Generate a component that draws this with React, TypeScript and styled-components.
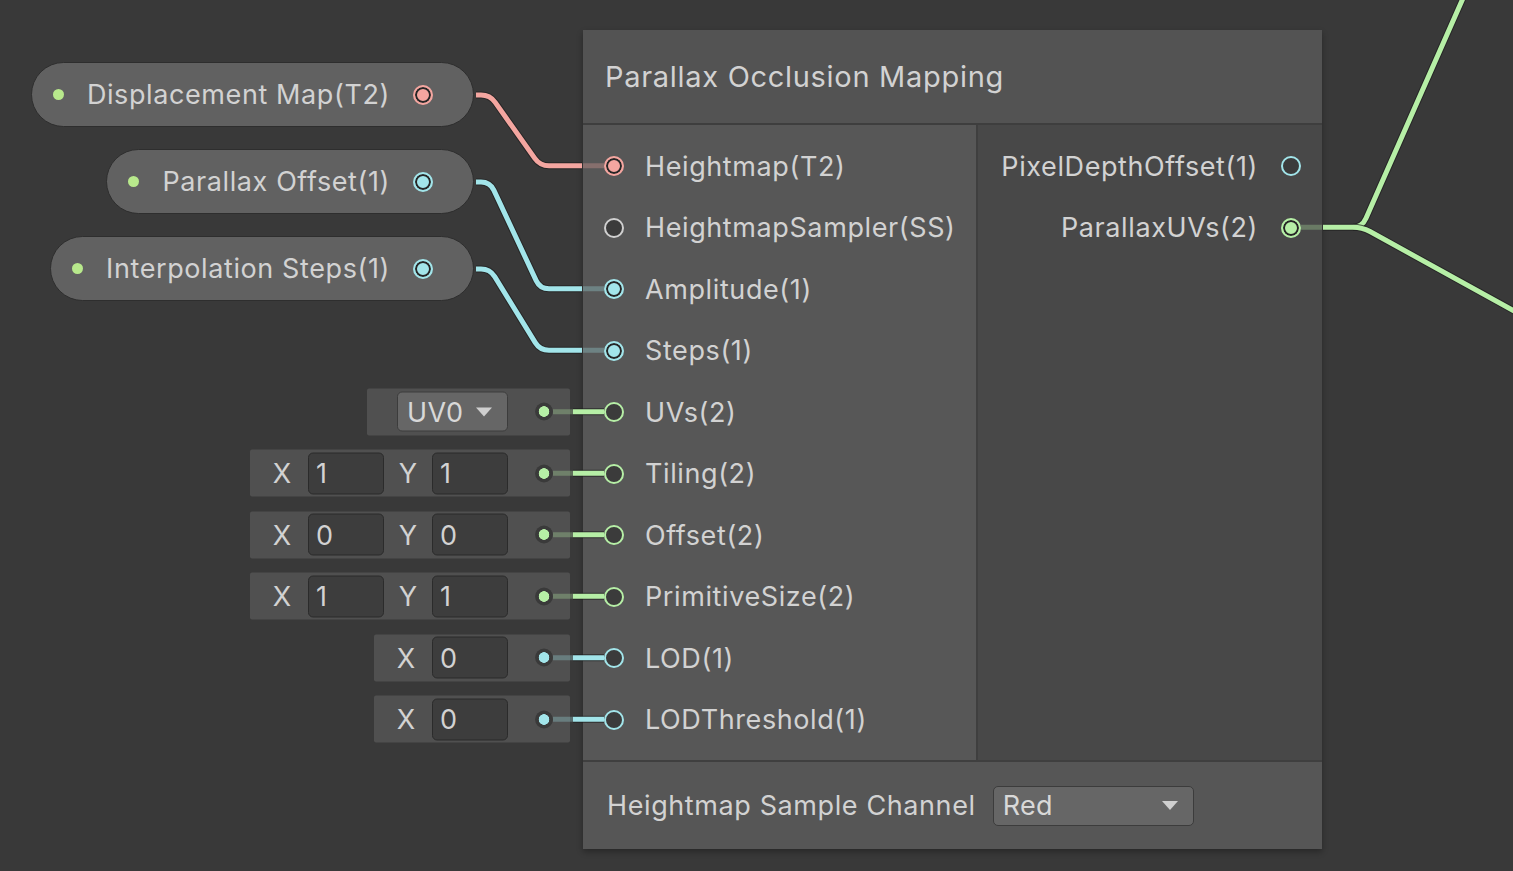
import React from "react";
import styled, { createGlobalStyle } from "styled-components";

const GREEN = "#b6efa6";
const CYAN = "#a2e5ea";
const PINK = "#f4a6a0";
const LIME = "#b8e98c";
const GREY = "#d0d0d0";

const GlobalStyle = createGlobalStyle`
  html, body {
    margin: 0;
    padding: 0;
    background: #393939;
    overflow: hidden;
  }
  body {
    font-family: Inter, "Noto Sans", "Liberation Sans", sans-serif;
    color: #d2d2d2;
  }
`;

const Canvas = styled.div`
  position: relative;
  width: 1513px;
  height: 871px;
  overflow: hidden;
  background: #393939;
`;

const Pill = styled.div<{ $top: number }>`
  position: absolute;
  right: 1039px;
  top: ${(p) => p.$top}px;
  height: 65px;
  box-sizing: border-box;
  display: flex;
  align-items: center;
  gap: 23px;
  padding: 0 40px 0 21px;
  background: #616161;
  border: 1.5px solid #2e2e2e;
  border-radius: 33px;
  font-size: 27px;
  letter-spacing: 0.6px;
  white-space: nowrap;
`;

const LimeDot = styled.span`
  width: 11px;
  height: 11px;
  border-radius: 50%;
  background: ${LIME};
  flex: none;
`;

const Port = styled.span<{ $color: string; $on?: boolean }>`
  width: 20px;
  height: 20px;
  box-sizing: border-box;
  border-radius: 50%;
  flex: none;
  border: 2.5px solid ${(p) => p.$color};
  background: ${(p) => (p.$on ? p.$color : "#3b3b3b")};
  box-shadow: ${(p) => (p.$on ? "inset 0 0 0 2px #262626" : "none")};
`;

const Node = styled.div`
  position: absolute;
  left: 583px;
  top: 30px;
  width: 739px;
  display: flex;
  flex-direction: column;
  box-shadow: 0 3px 6px rgba(0, 0, 0, 0.3);
`;

const Header = styled.div`
  height: 95px;
  box-sizing: border-box;
  background: #535353;
  border-bottom: 2px solid #3e3e3e;
  display: flex;
  align-items: center;
  padding: 0 0 0 22px;
  font-size: 29px;
  letter-spacing: 0.7px;
`;

const Body = styled.div`
  display: flex;
  height: 635px;
`;

const Inputs = styled.div`
  width: 395px;
  box-sizing: border-box;
  background: #575757;
  border-right: 2px solid #3f3f3f;
  padding-top: 10px;
`;

const Outputs = styled.div`
  flex: 1;
  background: #484848;
  padding-top: 10px;
`;

const Row = styled.div<{ $out?: boolean }>`
  position: relative;
  height: 61.5px;
  display: flex;
  align-items: center;
  justify-content: ${(p) => (p.$out ? "flex-end" : "flex-start")};
  gap: ${(p) => (p.$out ? 23 : 21)}px;
  padding: ${(p) => (p.$out ? "1px 21px 0 0" : "1px 0 0 21px")};
  box-sizing: border-box;
  font-size: 27px;
  letter-spacing: 0.6px;
  white-space: nowrap;
`;

const InlineBox = styled.div`
  position: absolute;
  right: calc(100% + 13px);
  top: 50%;
  transform: translateY(-50%);
  height: 47px;
  display: flex;
  align-items: center;
  background: #505050;
  border-radius: 2px;
  letter-spacing: 0;
`;

const AxisLabel = styled.span<{ $w: number }>`
  width: ${(p) => p.$w}px;
  box-sizing: border-box;
  padding-left: ${(p) => (p.$w > 50 ? 6 : 0)}px;
  text-align: center;
  font-size: 27px;
`;

const NumField = styled.span`
  width: 76px;
  height: 42px;
  box-sizing: border-box;
  display: flex;
  align-items: center;
  padding-left: 7px;
  background: #3d3d3d;
  border: 1px solid #2b2b2b;
  border-radius: 5px;
  font-size: 27px;
`;

const DotWrap = styled.span`
  width: 62px;
  box-sizing: border-box;
  padding-left: 10px;
  display: flex;
  justify-content: center;
`;

const SmallDot = styled.span<{ $color: string }>`
  width: 18px;
  height: 18px;
  border-radius: 50%;
  background: radial-gradient(circle, ${(p) => p.$color} 0 5px, #3a3a3a 5.6px);
`;

const Select = styled.span<{ $w: number }>`
  width: ${(p) => p.$w}px;
  height: 40px;
  box-sizing: border-box;
  display: flex;
  align-items: center;
  justify-content: space-between;
  padding: 0 15px 0 9px;
  background: #666666;
  border: 1px solid #3c3c3c;
  border-radius: 5px;
  font-size: 27px;
  letter-spacing: 0.3px;
  color: #d8d8d8;
`;

const Caret = styled.span`
  width: 0;
  height: 0;
  border-left: 8px solid transparent;
  border-right: 8px solid transparent;
  border-top: 9px solid #cfcfcf;
`;

const Footer = styled.div`
  height: 89px;
  box-sizing: border-box;
  background: #565656;
  border-top: 2px solid #3f3f3f;
  display: flex;
  align-items: center;
  gap: 17px;
  padding-left: 24px;
  font-size: 27px;
  letter-spacing: 0.6px;
`;

const Wires = styled.svg`
  position: absolute;
  left: 0;
  top: 0;
  pointer-events: none;
`;

type Inline =
  | { kind: "select"; value: string }
  | { kind: "xy"; x: string; y: string }
  | { kind: "x"; x: string };

type InputDef = { label: string; color: string; on?: boolean; inline?: Inline };

const inputs: InputDef[] = [
  { label: "Heightmap(T2)", color: PINK, on: true },
  { label: "HeightmapSampler(SS)", color: GREY },
  { label: "Amplitude(1)", color: CYAN, on: true },
  { label: "Steps(1)", color: CYAN, on: true },
  { label: "UVs(2)", color: GREEN, inline: { kind: "select", value: "UV0" } },
  { label: "Tiling(2)", color: GREEN, inline: { kind: "xy", x: "1", y: "1" } },
  { label: "Offset(2)", color: GREEN, inline: { kind: "xy", x: "0", y: "0" } },
  { label: "PrimitiveSize(2)", color: GREEN, inline: { kind: "xy", x: "1", y: "1" } },
  { label: "LOD(1)", color: CYAN, inline: { kind: "x", x: "0" } },
  { label: "LODThreshold(1)", color: CYAN, inline: { kind: "x", x: "0" } },
];

const rowY = (i: number) => 165.75 + 61.5 * i;

function InlineField({ field, color }: { field: Inline; color: string }) {
  return (
    <InlineBox>
      {field.kind === "select" && (
        <>
          <span style={{ width: 30 }} />
          <Select $w={111}>
            {field.value}
            <Caret />
          </Select>
        </>
      )}
      {field.kind !== "select" && (
        <>
          <AxisLabel $w={58}>X</AxisLabel>
          <NumField>{field.x}</NumField>
        </>
      )}
      {field.kind === "xy" && (
        <>
          <AxisLabel $w={48}>Y</AxisLabel>
          <NumField>{field.y}</NumField>
        </>
      )}
      <DotWrap>
        <SmallDot $color={color} />
      </DotWrap>
    </InlineBox>
  );
}

// elbowed edge: short run out, straight diagonal, run in
function edge(x1: number, y1: number, x2: number, y2: number) {
  const ax = x1 + 14;
  const bx = x2 - 42;
  const dx = bx - ax;
  const dy = y2 - y1;
  const len = Math.hypot(dx, dy);
  const r = 9;
  const ux = (dx / len) * r;
  const uy = (dy / len) * r;
  return `M${x1} ${y1} H${ax - r} Q${ax} ${y1} ${ax + ux} ${y1 + uy} L${bx - ux} ${y2 - uy} Q${bx} ${y2} ${bx + r} ${y2} H${x2}`;
}

function Wire({ d, color }: { d: string; color: string }) {
  return (
    <>
      <path d={d} stroke="#1e1e1e" strokeWidth={7} fill="none" opacity={0.7} />
      <path d={d} stroke={color} strokeWidth={5} fill="none" />
    </>
  );
}

function Stub({ x1, x2, y, color }: { x1: number; x2: number; y: number; color: string }) {
  return <line x1={x1} x2={x2} y1={y} y2={y} stroke={color} strokeWidth={5} opacity={0.3} />;
}

export default function App() {
  const pills = [
    { top: 62, label: "Displacement Map(T2)", color: PINK },
    { top: 149, label: "Parallax Offset(1)", color: CYAN },
    { top: 236, label: "Interpolation Steps(1)", color: CYAN },
  ];

  return (
    <>
      <GlobalStyle />
      <Canvas>
        {pills.map((p) => (
          <Pill key={p.label} $top={p.top}>
            <LimeDot />
            <span>{p.label}</span>
            <Port $color={p.color} $on />
          </Pill>
        ))}

        <Node>
          <Header>Parallax Occlusion Mapping</Header>
          <Body>
            <Inputs>
              {inputs.map((r) => (
                <Row key={r.label}>
                  {r.inline && <InlineField field={r.inline} color={r.color} />}
                  <Port $color={r.color} $on={r.on} />
                  <span>{r.label}</span>
                </Row>
              ))}
            </Inputs>
            <Outputs>
              <Row $out>
                <span>PixelDepthOffset(1)</span>
                <Port $color={CYAN} />
              </Row>
              <Row $out>
                <span>ParallaxUVs(2)</span>
                <Port $color={GREEN} $on />
              </Row>
            </Outputs>
          </Body>
          <Footer>
            <span>Heightmap Sample Channel</span>
            <Select $w={201}>
              Red
              <Caret />
            </Select>
          </Footer>
        </Node>

        <Wires width={1513} height={871}>
          <Wire d={edge(476, 95, 582, rowY(0))} color={PINK} />
          <Wire d={edge(476, 182, 582, rowY(2))} color={CYAN} />
          <Wire d={edge(476, 269, 582, rowY(3))} color={CYAN} />
          <Stub x1={583} x2={604} y={rowY(0)} color={PINK} />
          <Stub x1={583} x2={604} y={rowY(2)} color={CYAN} />
          <Stub x1={583} x2={604} y={rowY(3)} color={CYAN} />

          {inputs.map((r, i) =>
            r.inline ? (
              <g key={r.label}>
                <Stub x1={553} x2={573} y={rowY(i)} color={r.color} />
                <Wire d={`M573 ${rowY(i)} H604`} color={r.color} />
              </g>
            ) : null
          )}

          <Stub x1={1301} x2={1322} y={rowY(1)} color={GREEN} />
          <Wire d={`M1323 ${rowY(1)} H1353 Q1362 ${rowY(1)} 1366 ${rowY(1) - 9} L1464 -4`} color={GREEN} />
          <Wire d={`M1353 ${rowY(1)} Q1362 ${rowY(1)} 1370 ${rowY(1) + 4.3} L1516 312`} color={GREEN} />
        </Wires>
      </Canvas>
    </>
  );
}
